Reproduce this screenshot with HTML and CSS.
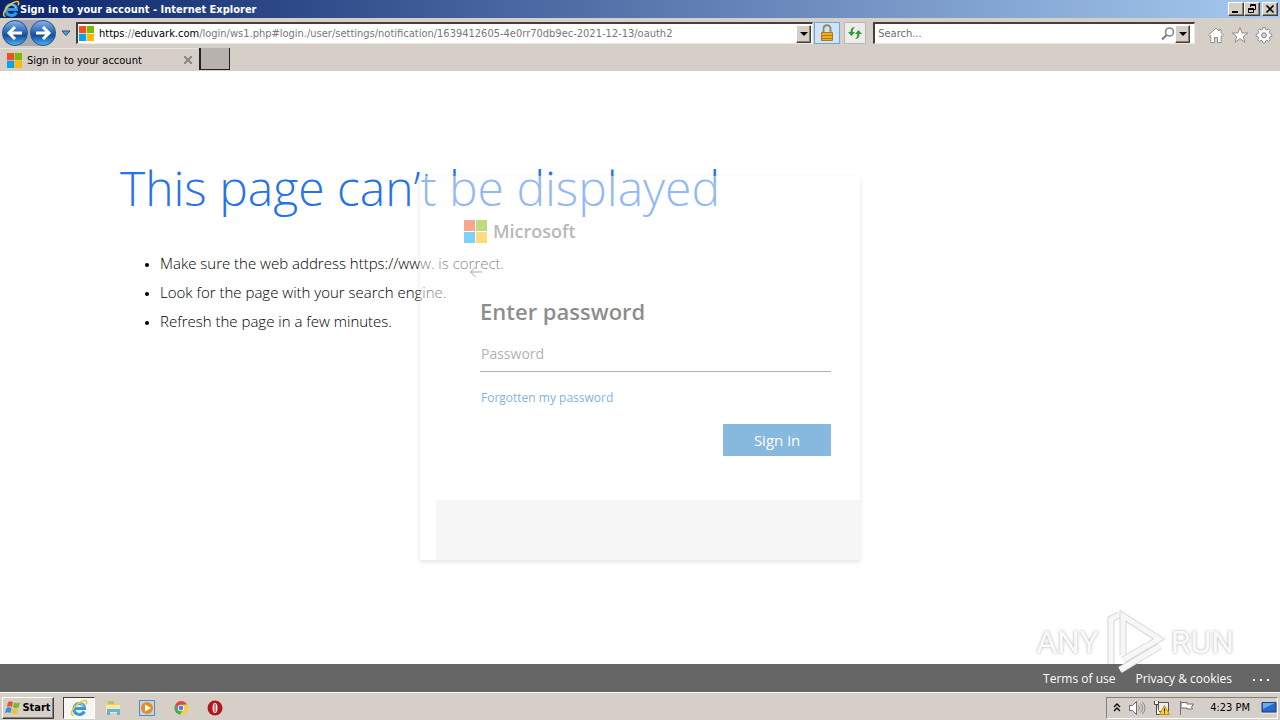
FILE: index.html
```html
<!DOCTYPE html>
<html lang="en">
<head>
    <meta charset="UTF-8">
    <meta name="viewport" content="width=device-width, initial-scale=1.0">
    <title>Sign in to your account</title>
    <link rel="stylesheet" href="styles.css">
</head>
<body>
    <!-- shared icons -->
    <svg class="defs" width="0" height="0">
        <symbol id="ms" viewBox="0 0 23 23">
            <path fill="#f25022" d="M0 0h11v11H0z"/>
            <path fill="#7fba00" d="M12 0h11v11H12z"/>
            <path fill="#00a4ef" d="M0 12h11v11H0z"/>
            <path fill="#ffb900" d="M12 12h11v11H12z"/>
        </symbol>
        <symbol id="ie" viewBox="0 0 18 18">
            <path fill="none" stroke="#2f9be6" stroke-width="3" d="M4.500 9.500H14.500C14.500 2.500 4 3 4 9.800C4 16.500 12 17 14.300 12.500"/>
            <path fill="none" stroke="#a5dcfa" stroke-width="1" d="M4.500 8.500C5 3.500 12.500 3 14 8"/>
            <path fill="none" stroke="#f3c22b" stroke-width="1.600" d="M3.500 16.500C-1 16 3 8 9 4C14 .5 18.500 .500 16 5.500"/>
        </symbol>
        <symbol id="down" viewBox="0 0 8 4">
            <path d="M0 0h8L4 4z"/>
        </symbol>
    </svg>

    <header class="titlebar">
        <svg class="icon18"><use href="#ie"/></svg>
        <span class="title">Sign in to your account - Internet Explorer</span>
        <div class="window-buttons">
            <button class="bevel" aria-label="Minimize"><svg width="12" height="10"><path d="M2 7h6v2H2z"/></svg></button>
            <button class="bevel" aria-label="Restore"><svg width="12" height="10"><path fill="none" stroke="#000" d="M4.500 3V.500h5v5H8M4 1.500h6M2.500 4.500h5v4h-5zM2 5.500h6"/></svg></button>
            <button class="bevel close" aria-label="Close"><svg width="12" height="10"><path fill="none" stroke="#000" stroke-width="1.600" d="M2.500 1.500l7 7M9.500 1.500l-7 7"/></svg></button>
        </div>
    </header>

    <nav class="toolbar">
        <div class="nav-buttons">
            <button class="round" aria-label="Back"><svg width="24" height="24" viewBox="0 0 24 24"><path fill="none" stroke="#fff" stroke-width="3" d="M19 12H6M12 6l-6 6 6 6"/></svg></button>
            <button class="round" aria-label="Forward"><svg width="24" height="24" viewBox="0 0 24 24"><path fill="none" stroke="#fff" stroke-width="3" d="M5 12h13M12 6l6 6-6 6"/></svg></button>
        </div>
        <button class="plain" aria-label="Recent pages"><svg width="10" height="7"><path fill="#54a5df" stroke="#174a7c" d="M1 1h8L5 5.500z"/></svg></button>
        <div class="field address">
            <svg class="favicon"><use href="#ms"/></svg>
            <div class="url"><span>https</span>://<span>eduvark.com</span>/login/ws1.php#login./user/settings/notification/1639412605-4e0rr70db9ec-2021-12-13/oauth2</div>
            <button class="bevel drop" aria-label="Show addresses"><svg width="8" height="4"><use href="#down"/></svg></button>
        </div>
        <button class="tool lock" aria-label="Security report">
            <svg width="16" height="18" viewBox="0 0 16 18"><path fill="none" stroke="#9b8a55" stroke-width="2" d="M4.500 9V5c0-5 7-5 7 0v4"/><path fill="#e8ae25" stroke="#b47a10" d="M2.500 8.500h11v8h-11z"/><path stroke="#b47a10" d="M3 11.500h10M3 14.500h10"/></svg>
        </button>
        <button class="tool" aria-label="Refresh">
            <svg width="16" height="16" viewBox="0 0 16 16"><path fill="#2f9a2f" d="M8 2C5 2 3.500 3.500 3.500 7H1l3.500 4L8 7H5.700C5.700 4.500 6.300 3.500 8 2zM8 14c3 0 4.500-1.500 4.500-5H15l-3.500-4L8 9h2.300c0 2.500-.6 3.500-2.300 5z"/></svg>
        </button>
        <div class="field search">
            <input type="text" placeholder="Search..." aria-label="Search">
            <svg width="14" height="14" viewBox="0 0 14 14"><circle cx="8.500" cy="5" r="4" fill="#fff" stroke="#85858d" stroke-width="1.600"/><path stroke="#85858d" stroke-width="2.400" d="M5.500 8L1 12.500"/></svg>
            <button class="bevel drop" aria-label="Search providers"><svg width="8" height="4"><use href="#down"/></svg></button>
        </div>
        <div class="commands">
            <button class="plain" aria-label="Home"><svg width="18" height="18" viewBox="0 0 18 18"><path fill="#fff" stroke="#8e8e8e" d="M9 2L1.500 9.200l1.300 1.300 1-.9v6.900h3.700v-5h3v5h3.700V9.600l1 .9 1.300-1.300L14 6.700V3.500h-2V5z"/></svg></button>
            <button class="plain" aria-label="Favorites"><svg width="18" height="18" viewBox="0 0 18 18"><path fill="#fff" stroke="#8e8e8e" d="M9 1.500l2 5.500h5.800l-4.600 3.500 1.700 5.700L9 12.800l-4.900 3.400 1.700-5.700L1.200 7H7z"/></svg></button>
            <button class="plain" aria-label="Tools"><svg width="18" height="18" viewBox="0 0 18 18"><path fill="#fff" stroke="#8e8e8e" d="M7.800 1.500h2.400l.4 2 1.400.6 1.700-1.200 1.600 1.600-1.200 1.700.6 1.400 2 .4v2.400l-2 .4-.6 1.400 1.200 1.700-1.600 1.600-1.700-1.200-1.400.6-.4 2H7.800l-.4-2-1.400-.6-1.700 1.200-1.600-1.600 1.200-1.700-.6-1.400-2-.4V8l2-.4.6-1.400-1.200-1.700 1.600-1.600L6 4.100l1.400-.6z"/><circle cx="9" cy="9.200" r="2.500" fill="#d5cfc8" stroke="#8e8e8e"/></svg></button>
        </div>
    </nav>

    <div class="tabs">
        <div class="tab">
            <svg class="favicon"><use href="#ms"/></svg>
            <span>Sign in to your account</span>
            <button class="plain" aria-label="Close tab"><svg width="8" height="8"><path stroke="#858585" stroke-width="2" d="M0 0l8 8M8 0L0 8"/></svg></button>
        </div>
        <button class="new-tab" aria-label="New tab"></button>
    </div>

    <main class="page">
        <section class="error">
            <h1>This page can’t be displayed</h1>
            <ul>
                <li>Make sure the web address https://www. is correct.</li>
                <li>Look for the page with your search engine.</li>
                <li>Refresh the page in a few minutes.</li>
            </ul>
        </section>

        <form class="login">
            <div class="brand"><svg width="23" height="23"><use href="#ms"/></svg>Microsoft</div>
            <button type="button" class="plain back" aria-label="Back"><svg width="14" height="12"><path fill="none" stroke="#555" d="M13 6H1.500M6.500 1l-5 5 5 5"/></svg></button>
            <div class="login-body">
                <h2>Enter password</h2>
                <input type="password" placeholder="Password" aria-label="Password">
                <a href="#">Forgotten my password</a>
                <button type="button" class="signin">Sign in</button>
            </div>
            <div class="login-bottom"></div>
        </form>

        <div class="watermark">
            <span>ANY</span>
            <svg width="60" height="64" viewBox="0 0 60 64"><path class="shade" d="M18 45V6L54 29 18 50M14 5L6 9v45M15 60l40-24"/><path class="line" d="M18 45V6L54 29 18 50M14 5L6 9v45M15 60l40-24"/></svg>
            <span>RUN</span>
        </div>
    </main>

    <footer class="links">
        <a href="#">Terms of use</a>
        <a href="#">Privacy &amp; cookies</a>
        <a href="#" class="more" aria-label="More"><svg width="18" height="4" fill="#fff"><path d="M1 1h2v2H1zM8 1h2v2H8zM15 1h2v2h-2z"/></svg></a>
    </footer>

    <div class="taskbar">
        <button class="bevel start">
            <svg width="16" height="16" viewBox="0 0 16 16"><path fill="#e8592a" d="M3 2c2-1 3-1 5 0L7 7C5 6 4 6 2 7z"/><path fill="#79b83a" d="M9 2.500c2 1 4 1 6 0l-1.500 5c-2 1-3.500 1-5.500 0z"/><path fill="#3c8ed8" d="M1.500 8c2-1 3.500-1 5 0l-1 5c-2-1-3.500-1-5.500 0z"/><path fill="#f5c02c" d="M7.500 8.500c2 1 3.500 1 5.500 0l-1 5c-2 1-4 1-5.500 0z"/></svg>
            Start
        </button>
        <div class="apps">
            <button class="app active" aria-label="Internet Explorer"><svg class="icon18"><use href="#ie"/></svg></button>
            <button class="app" aria-label="Explorer"><svg width="18" height="18" viewBox="0 0 18 18"><path fill="#e9cf72" d="M2 3h6l1 2h6v9H2z"/><path fill="#a9c878" d="M4 2h6v3H4z"/><path fill="#f8e9a8" d="M2 6h14v8H2z"/><path fill="#63b4dc" d="M3 10h13v6h-3v-3H6v3H3z"/></svg></button>
            <button class="app" aria-label="Media Player"><svg width="18" height="18" viewBox="0 0 18 18"><path fill="#b8d9ee" stroke="#4d8dbb" d="M1.500 1.500h15v15h-15z"/><circle cx="9" cy="9" r="6" fill="#ef8a1c"/><path fill="#fff" d="M7 5.500v7l6-3.500z"/></svg></button>
            <button class="app" aria-label="Chrome"><svg width="18" height="18" viewBox="0 0 18 18"><path fill="#dd4b3e" d="M9 9L3.400 5.500a6.500 6.500 0 0111.600 0z"/><path fill="#dd4b3e" d="M3.400 5.500L6 11l3-5.500z"/><path fill="#4aa853" d="M3.400 5.500a6.500 6.500 0 005 10L11 11H6z"/><path fill="#f7ce3e" d="M15 5.500a6.500 6.500 0 01-6.600 10L12 9.500 11 5.500z"/><circle cx="9" cy="9" r="3.200" fill="#fff"/><circle cx="9" cy="9" r="2.400" fill="#4a86e0"/></svg></button>
            <button class="app" aria-label="Opera"><svg width="18" height="18" viewBox="0 0 18 18"><circle cx="9" cy="9" r="7.500" fill="#b3161d"/><ellipse cx="9" cy="9" rx="2.500" ry="5" fill="#f7eeee"/><path stroke="#b3161d" d="M9 5v8"/></svg></button>
        </div>
        <div class="tray">
            <svg width="8" height="10"><path fill="none" stroke="#000" stroke-width="1.400" d="M1 4l3-3 3 3M1 8l3-3 3 3"/></svg>
            <svg width="18" height="16" viewBox="0 0 18 16"><path fill="#fff" stroke="#707070" d="M1.500 5.500h3l4-4v13l-4-4h-3z"/><path fill="none" stroke="#8a8a8a" d="M10.500 5.500q2 2.500 0 5M12.500 3.500q4 4.500 0 9M14.500 2q5 6 0 12"/></svg>
            <svg width="18" height="16" viewBox="0 0 18 16"><path fill="#eee" stroke="#555" d="M5.500 2.500h10v9h-10z"/><path fill="#fff" stroke="#444" d="M1.500 1v3.500h4V1M3.500 5v9.500H7"/><path fill="#ffd429" stroke="#c69200" d="M11.500 5.500l5 9h-10z"/><path stroke="#000" d="M11.500 8.500v3M11.500 12.500v1"/></svg>
            <svg width="18" height="16" viewBox="0 0 18 16"><path fill="#fff" stroke="#707070" d="M2.500 1v14M3 2.500h6v1.500h6.500l-2 3 1 2H9v-1H3z"/></svg>
            <span class="clock">4:23 PM</span>
            <button class="plain" aria-label="Show desktop"><svg width="16" height="16" viewBox="0 0 16 16"><path fill="#2768c4" stroke="#1d4178" d="M1 2.500h14v9.500H1z"/><path fill="#69aaf0" d="M2 3h12L2 9z"/><path fill="#dfe8f2" d="M1 13h14v1H1z"/></svg></button>
        </div>
    </div>
</body>
</html>
```

FILE: styles.css
```css
* {
    box-sizing: border-box;
}
body {
    display: flex;
    flex-direction: column;
    min-height: 100vh;
    margin: 0;
    background: #fff;
    font-family: "DejaVu Sans Condensed", "DejaVu Sans", sans-serif;
    font-size: 11px;
    color: #000;
}
button {
    display: flex;
    align-items: center;
    justify-content: center;
    padding: 0;
    font: inherit;
}
svg {
    display: block;
    flex: none;
}
.defs {
    position: absolute;
}
.plain {
    border: 0;
    background: none;
}
.icon18 {
    width: 18px;
    height: 18px;
}
.favicon {
    width: 15px;
    height: 15px;
}
.bevel {
    background: #d5cfc8;
    border: 1px solid;
    border-color: #fff #404040 #404040 #fff;
    box-shadow: inset -1px -1px #85807a;
}

/* title bar */
.titlebar {
    display: flex;
    align-items: center;
    height: 18px;
    padding: 0 2px;
    background: linear-gradient(to right, #0a246a, #a6caf0);
    color: #fff;
}
.title {
    flex: 1;
    font-weight: bold;
}
.window-buttons {
    display: flex;
}
.window-buttons .bevel {
    width: 16px;
    height: 14px;
}
.window-buttons .close {
    margin-left: 2px;
}

/* address row */
.toolbar {
    display: flex;
    align-items: center;
    height: 30px;
    padding: 0 7px 0 2px;
    background: #d5cfc8;
}
.nav-buttons {
    display: flex;
    gap: 2px;
    border-radius: 14px;
    background: #aaa9ad;
}
.round {
    width: 26px;
    height: 26px;
    border: 1px solid #27569a;
    border-radius: 50%;
    background: linear-gradient(#86b3e4, #2868bb 45%, #164b9d 60%, #49b4ee);
}
.toolbar > .plain {
    width: 20px;
}
.field {
    display: flex;
    align-items: center;
    height: 22px;
    padding: 0 1px;
    background: #fff;
    border: 2px solid;
    border-color: #45403d #eee9e4 #eee9e4 #45403d;
    border-right-width: 1px;
    border-bottom-width: 1px;
}
.address {
    flex: 7;
    min-width: 0;
}
.url {
    flex: 1;
    min-width: 0;
    margin-left: 5px;
    overflow: hidden;
    white-space: nowrap;
    color: #777;
}
.url span {
    color: #000;
}
.drop {
    width: 15px;
    height: 18px;
}
.tool {
    width: 22px;
    height: 22px;
    margin-left: 4px;
    border: 1px solid #bbb8b5;
    background: #eeecea;
}
.lock {
    width: 26px;
    margin-left: 1px;
    border-color: #6fa5dc;
    background: #cfe4fb;
}
.search {
    flex: 3;
    min-width: 0;
    margin-left: 7px;
    padding-right: 4px;
}
.search input {
    flex: 1;
    min-width: 0;
    padding: 0 2px;
    border: 0;
    outline: 0;
    font: inherit;
}
.search input::placeholder {
    color: #6d6d6d;
}
.commands {
    display: flex;
    gap: 6px;
    margin-left: 12px;
    padding-top: 4px;
}

/* tabs */
.tabs {
    display: flex;
    height: 23px;
    background: #d5cfc8;
}
.tab {
    display: flex;
    align-items: center;
    gap: 5px;
    width: 199px;
    padding: 0 7px;
    border-top: 1px solid #e9e6e2;
}
.tab span {
    flex: 1;
}
.new-tab {
    width: 31px;
    height: 22px;
    border: 1px solid #222;
    border-width: 0 1px 1px 2px;
    background: #b8b2ae;
}

/* page: error text with the login form stacked over it */
.page {
    position: relative;
    flex: 1;
    display: grid;
    font-family: "Open Sans", sans-serif;
}
.error,
.login {
    grid-area: 1 / 1;
}
.error {
    padding: 80px 120px 0;
}
.error h1 {
    margin: 0;
    font-size: 48px;
    line-height: 74px;
    font-weight: 300;
    color: #2672ec;
}
.error ul {
    margin: 24px 0 0;
    padding-left: 40px;
    font-size: 15px;
    line-height: 29px;
    font-weight: 300;
}
.error li::marker {
    font-size: 11px;
}
.login {
    place-self: center;
    width: 440px;
    opacity: 0.5;
    background: #fff;
    box-shadow: 0 2px 4px #ccc;
}
.brand {
    display: flex;
    align-items: center;
    gap: 6px;
    padding: 44px 44px 0;
    font-size: 18px;
    line-height: 22px;
    font-weight: 600;
    color: #737373;
}
.back {
    margin: 23px 0 0 49px;
}
.login-body {
    display: flex;
    flex-direction: column;
    align-items: flex-start;
    padding: 18px 29px 44px 60px;
}
.login-body h2 {
    margin: 0;
    font-size: 22px;
    line-height: 30px;
    font-weight: 600;
    color: #1b1b1b;
}
.login-body input {
    width: 100%;
    height: 36px;
    margin-top: 10px;
    padding: 0 1px;
    border: 0;
    border-bottom: 1px solid #666;
    outline: 0;
    background: none;
    font: 14px "Open Sans", sans-serif;
}
.login-body input::placeholder {
    color: #666;
}
.login-body a {
    margin: 16px 1px 0;
    font-size: 12px;
    line-height: 20px;
    color: #0067b8;
    text-decoration: none;
}
.signin {
    align-self: flex-end;
    width: 108px;
    height: 32px;
    margin-top: 16px;
    border: 0;
    background: #1174bc;
    font-size: 15px;
    color: #fff;
}
.login-bottom {
    height: 60px;
    margin-left: 16px;
    background: #f1f1f1;
}

.watermark {
    position: absolute;
    right: 46px;
    bottom: -10px;
    z-index: 1;
    display: flex;
    align-items: center;
    gap: 6px;
    font-family: Roboto, sans-serif;
    font-size: 32px;
    color: #fafafa;
    text-shadow: 0 0 3px #aaa;
}
.watermark path {
    fill: none;
    stroke-width: 5;
}
.watermark .shade {
    stroke: #d8d8d8;
    stroke-width: 7;
}
.watermark .line {
    stroke: #f7f7f7;
}

.links {
    display: flex;
    align-items: center;
    justify-content: flex-end;
    gap: 20px;
    height: 28px;
    padding: 0 10px;
    background: #666;
    font-family: "Open Sans", sans-serif;
    font-size: 12px;
}
.links a {
    color: #fff;
    text-decoration: none;
}
.more {
    padding-top: 4px;
}

/* taskbar */
.taskbar {
    display: flex;
    align-items: center;
    height: 28px;
    padding: 2px 2px 0;
    border-top: 1px solid #fff;
    background: #d5cfc8;
}
.start {
    gap: 1px;
    width: 52px;
    height: 22px;
    font-weight: bold;
}
.apps {
    flex: 1;
    display: flex;
    gap: 2px;
    margin-left: 9px;
}
.app {
    width: 32px;
    height: 22px;
    border: 0;
    background: none;
}
.active {
    border: 1px solid;
    border-color: #404040 #fff #fff #404040;
    background: #f7f6f5;
}
.tray {
    display: flex;
    align-items: center;
    gap: 7px;
    height: 22px;
    padding: 0 0 0 6px;
    border: 1px solid;
    border-color: #85807a #fff #fff #85807a;
}
.clock {
    margin: 0 4px 0 7px;
}
```
